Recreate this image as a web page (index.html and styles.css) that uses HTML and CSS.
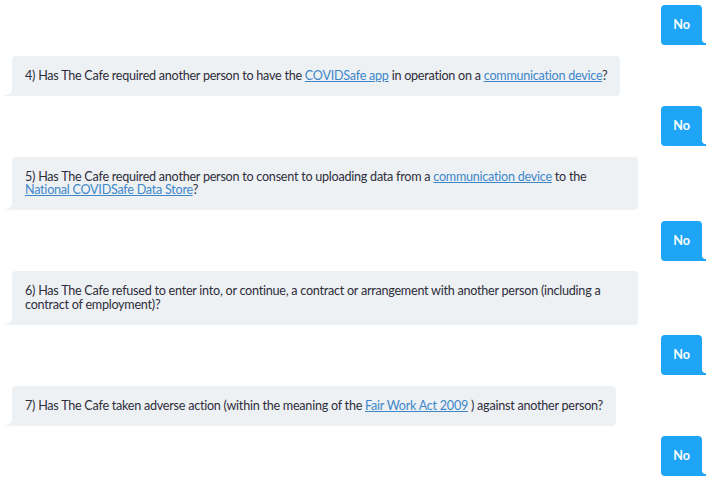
FILE: index.html
```html
<!DOCTYPE html>
<html>
<head>
<meta charset="utf-8">
<link rel="stylesheet" href="styles.css">
</head>
<body>
<div class="chat">
  <div class="row user"><div class="bubble user-bubble">No</div></div>
  <div class="row bot"><div class="bubble bot-bubble">4) Has The Cafe required another person to have the <a href="#">COVIDSafe app</a> in operation on a <a href="#">communication device</a>?</div></div>
  <div class="row user"><div class="bubble user-bubble">No</div></div>
  <div class="row bot"><div class="bubble bot-bubble">5) Has The Cafe required another person to consent to uploading data from a <a href="#">communication device</a> to the <a href="#">National COVIDSafe Data Store</a>?</div></div>
  <div class="row user"><div class="bubble user-bubble">No</div></div>
  <div class="row bot"><div class="bubble bot-bubble">6) Has The Cafe refused to enter into, or continue, a contract or arrangement with another person (including a contract of employment)?</div></div>
  <div class="row user"><div class="bubble user-bubble">No</div></div>
  <div class="row bot"><div class="bubble bot-bubble">7) Has The Cafe taken adverse action (within the meaning of the <a href="#">Fair Work Act 2009</a> ) against another person?</div></div>
  <div class="row user"><div class="bubble user-bubble">No</div></div>
</div>
</body>
</html>
```
FILE: styles.css
```css
html, body {
  margin: 0;
  padding: 0;
  background: #ffffff;
}
body {
  font-family: Lato, "Open Sans", sans-serif;
  font-size: 12.6px;
  letter-spacing: -0.25px;
  color: #2d2d3a;
}
.chat {
  display: flex;
  flex-direction: column;
  gap: 10.5px;
  padding: 5px 10px 0 12px;
}
.row {
  display: flex;
}
.row.user {
  justify-content: flex-end;
}
.row.bot {
  justify-content: flex-start;
}
.bubble {
  position: relative;
  line-height: 13.5px;
  padding: 13.25px 13px;
  border-radius: 4px;
}
.user-bubble {
  background: #1ea5f6;
  color: #ffffff;
  font-weight: 700;
  letter-spacing: 0;
  padding: 13.25px 12px;
  border-bottom-right-radius: 0;
}
.user-bubble::after {
  content: "";
  position: absolute;
  right: -4px;
  bottom: 0;
  width: 4px;
  height: 6px;
  background: radial-gradient(circle at 100% 0, transparent 4px, #1ea5f6 4.5px);
}
.bot-bubble {
  background: #eef1f4;
  max-width: 600px;
  border-bottom-left-radius: 0;
}
.bot-bubble::after {
  content: "";
  position: absolute;
  left: -7px;
  bottom: 0;
  width: 7px;
  height: 8px;
  background: radial-gradient(circle at 0 0, transparent 7px, #eef1f4 7.5px);
}
.bot-bubble a {
  color: #3d87c9;
  text-decoration: underline;
}
```
